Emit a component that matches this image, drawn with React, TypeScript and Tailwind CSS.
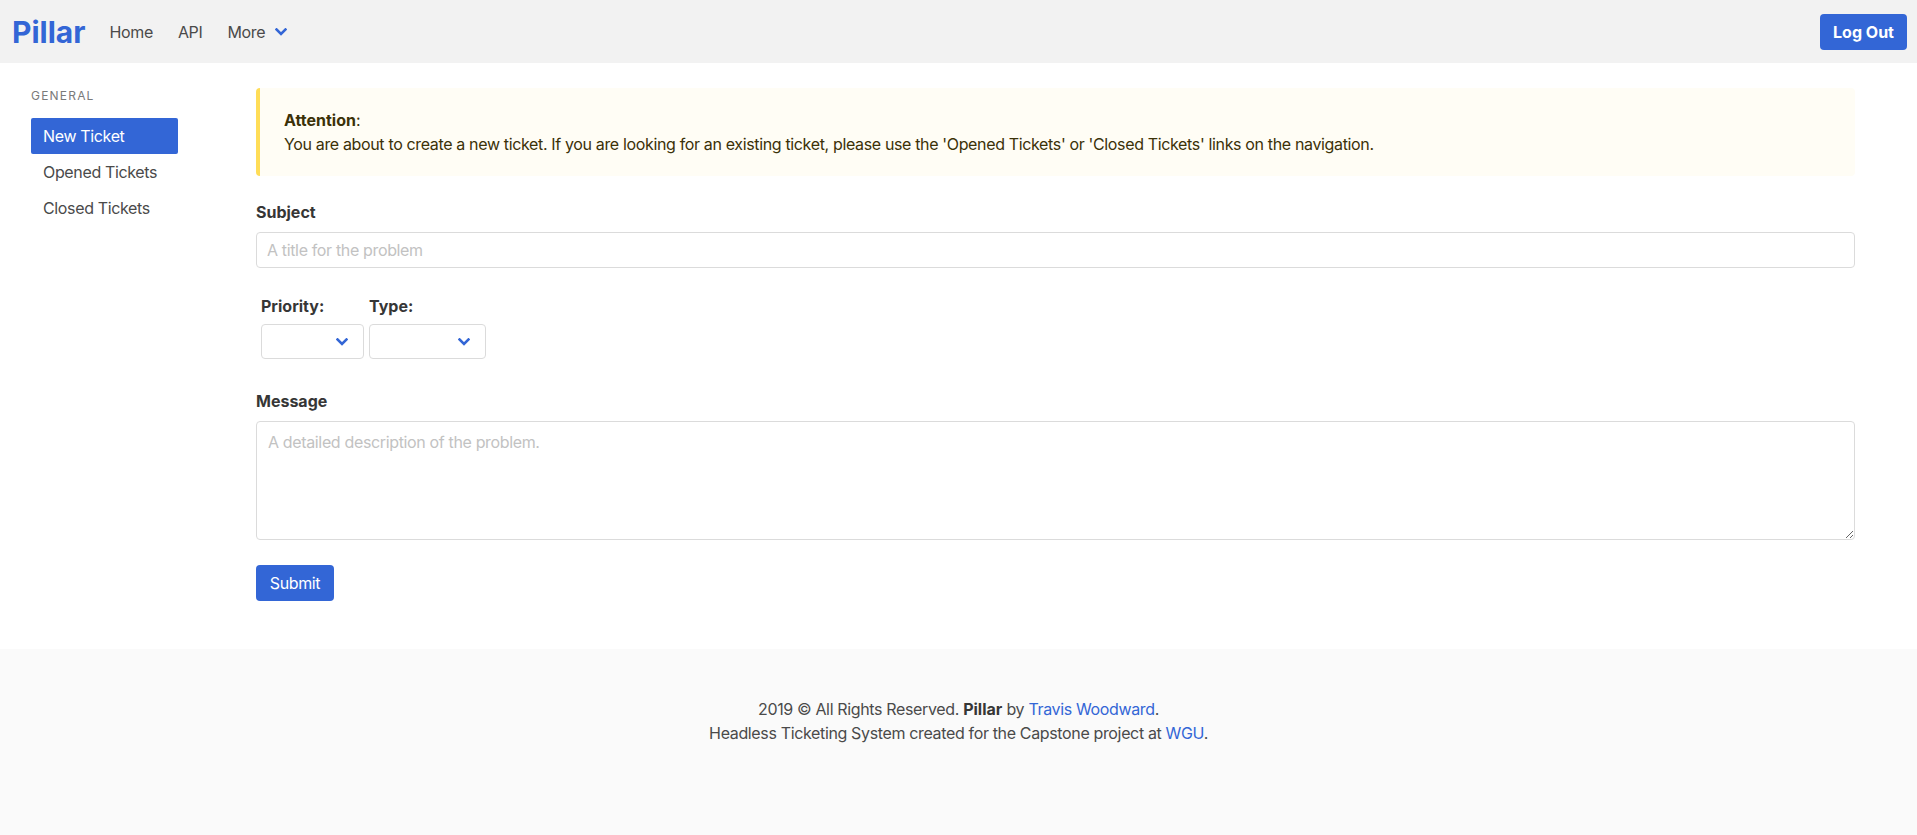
import React from "react";

const navLinks = ["Home", "API"];
const menuItems = ["New Ticket", "Opened Tickets", "Closed Tickets"];

function Chevron({ className }: { className?: string }) {
  return (
    <svg viewBox="0 0 12 8" className={className} fill="none">
      <polyline
        points="1.5,1.5 6,6 10.5,1.5"
        stroke="#3366d6"
        strokeWidth="2.6"
        strokeLinecap="square"
      />
    </svg>
  );
}

function Navbar() {
  return (
    <nav className="h-[63px] bg-[#f2f2f2] flex items-center justify-between pl-[12px] pr-[10px]">
      <div className="flex items-center">
        <span className="text-[30px] font-bold text-[#3366d6] leading-none tracking-normal">
          Pillar
        </span>
        <div className="flex items-center ml-[24px] gap-[25px] text-[16px] text-[#4a4a4a]">
          {navLinks.map((l) => (
            <span key={l}>{l}</span>
          ))}
          <span className="flex items-center gap-[10px]">
            More
            <Chevron className="w-[12px] h-[8px]" />
          </span>
        </div>
      </div>
      <button className="h-[36px] w-[87px] rounded-[4px] bg-[#3366d6] text-white font-bold text-[16px] tracking-normal">
        Log Out
      </button>
    </nav>
  );
}

function Sidebar() {
  return (
    <aside className="w-[147px] pt-[24px] shrink-0">
      <p className="text-[12px] leading-[18px] uppercase tracking-[0.1em] text-[#7a7a7a]">
        General
      </p>
      <ul className="mt-[13px] text-[16px] leading-[20px]">
        {menuItems.map((item, i) => (
          <li
            key={item}
            className={`px-[12px] py-[8px] rounded-[2px] ${
              i === 0 ? "bg-[#3366d6] text-white" : "text-[#4a4a4a]"
            }`}
          >
            {item}
          </li>
        ))}
      </ul>
    </aside>
  );
}

function SelectBox({ width }: { width: string }) {
  return (
    <div
      className={`${width} h-[35px] border border-[#dbdbdb] rounded-[4px] bg-white flex items-center justify-end pr-[15px]`}
    >
      <Chevron className="w-[12px] h-[8px]" />
    </div>
  );
}

function TicketForm() {
  const label = "text-[16px] leading-[24px] font-bold text-[#363636] tracking-normal";
  return (
    <main className="flex-1 ml-[78px] pt-[25px] pb-[48px]">
      <div className="bg-[#fffdf5] border-l-[4px] border-[#ffdd57] rounded-[4px] px-[24px] py-[20px] text-[16px] leading-[24px] text-[#3b3108]">
        <p>
          <strong className="font-bold tracking-normal">Attention</strong>:
        </p>
        <p>
          You are about to create a new ticket. If you are looking for an existing ticket, please use the
          'Opened Tickets' or 'Closed Tickets' links on the navigation.
        </p>
      </div>

      <label className={`block mt-[24px] ${label}`}>Subject</label>
      <input
        className="mt-[8px] w-full h-[36px] border border-[#dbdbdb] rounded-[4px] px-[10px] text-[16px] text-[#363636] placeholder:text-[#c2c2c2] outline-none"
        placeholder="A title for the problem"
      />

      <div className="flex gap-[5px] ml-[5px] mt-[26px]">
        <div>
          <p className={label}>Priority:</p>
          <div className="mt-[6px]">
            <SelectBox width="w-[103px]" />
          </div>
        </div>
        <div>
          <p className={label}>Type:</p>
          <div className="mt-[6px]">
            <SelectBox width="w-[117px]" />
          </div>
        </div>
      </div>

      <label className={`block mt-[30px] ${label}`}>Message</label>
      <textarea
        className="mt-[8px] block w-full h-[119px] border border-[#dbdbdb] rounded-[4px] px-[11px] py-[8px] text-[16px] leading-[24px] text-[#363636] placeholder:text-[#c2c2c2] outline-none"
        placeholder="A detailed description of the problem."
      />

      <button className="mt-[25px] w-[78px] h-[36px] rounded-[4px] bg-[#3366d6] text-white text-[16px]">
        Submit
      </button>
    </main>
  );
}

function Footer() {
  return (
    <footer className="bg-[#fafafa] pt-[48px] pb-[96px] text-center text-[16px] leading-[24px] text-[#4a4a4a]">
      <p>
        2019 © All Rights Reserved.{" "}
        <strong className="font-bold text-[#363636] tracking-normal">Pillar</strong> by{" "}
        <span className="text-[#3366d6]">Travis Woodward</span>.
      </p>
      <p>
        Headless Ticketing System created for the Capstone project at{" "}
        <span className="text-[#3366d6]">WGU</span>.
      </p>
    </footer>
  );
}

export default function App() {
  return (
    <div className="min-h-screen bg-white font-['Inter','Noto_Sans',sans-serif] tracking-[-0.022em]">
      <Navbar />
      <div className="flex pl-[31px] pr-[62px]">
        <Sidebar />
        <TicketForm />
      </div>
      <Footer />
    </div>
  );
}
